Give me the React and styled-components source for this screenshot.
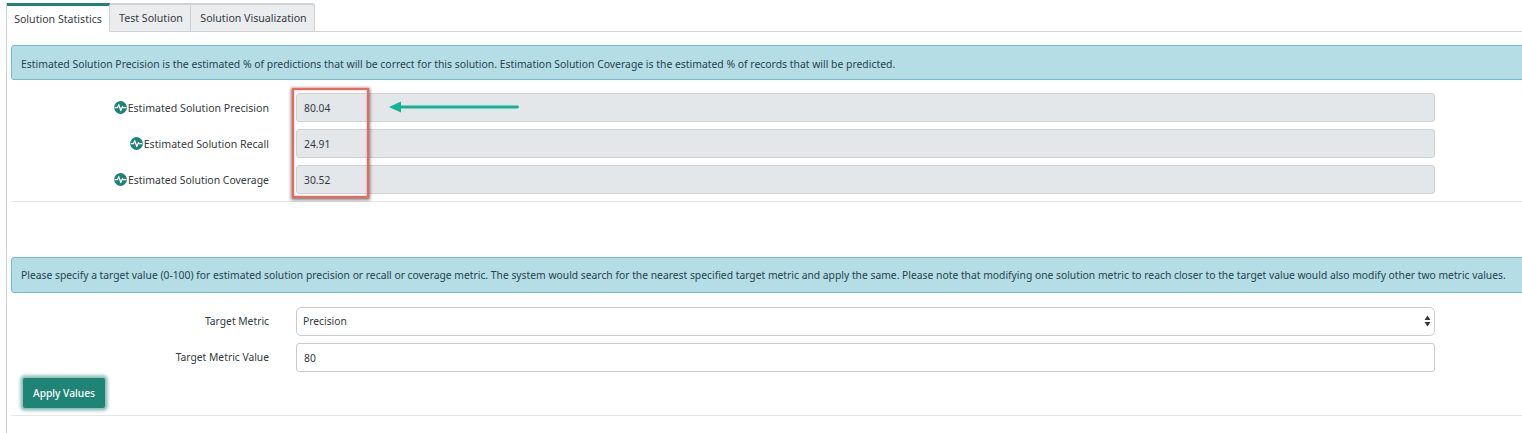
import React from "react";
import styled, { createGlobalStyle } from "styled-components";

const Global = createGlobalStyle`
  html, body { margin: 0; padding: 0; background: #fff; }
  body { font-family: "Noto Sans", "Open Sans", "Liberation Sans", sans-serif; color: #343a40; overflow: hidden; }
`;
const Page = styled.div`
  width: 1522px; height: 433px; box-sizing: border-box; padding: 3px 0 0 6px; overflow: hidden;
`;
const Panel = styled.div`
  border-left: 1px solid #cfd2d4; height: 430px;
`;
const TabBar = styled.div`
  display: flex; height: 29px; box-sizing: border-box; border-bottom: 1px solid #cfd2d4;
`;
const Tab = styled.div`
  height: 29px; box-sizing: border-box; display: flex; align-items: center; justify-content: center;
  width: ${p => p.$w}px; font-size: 10.6px; color: #343a40;
  background: ${p => (p.$active ? "#fff" : "#eaecee")};
  border-top: ${p => (p.$active ? "3px solid #1f8476" : "2px solid #cfd2d4")};
  border-right: 1px solid #cfd2d4;
  padding: ${p => (p.$active ? "0 0 0 0" : "0 0 0 2px")};
  border-bottom: ${p => (p.$active ? "1px solid #fff" : "1px solid #cfd2d4")};
  &:last-child { border-top-right-radius: 3px; }
`;
const Body = styled.div`
  padding: 13px 0 0 4px;
`;
const Alert = styled.div`
  height: ${p => p.$h}px; box-sizing: border-box; width: 1520px; display: flex; align-items: center; padding: ${p => p.$pt}px 0 0 9px;
  background: #b5dde5; border: 1px solid #6fbfcb; border-radius: 3px 0 0 3px;
  font-size: ${p => p.$size}px; color: #23444c; white-space: nowrap;
`;
const Section = styled.div`
  position: relative; padding-top: ${p => p.$top}px; display: flex; flex-direction: column; gap: 7px;
`;
const Row = styled.div`
  display: grid; grid-template-columns: 258px 1139px; column-gap: 27px; align-items: center; height: 29px;
`;
const Label = styled.div`
  display: flex; justify-content: flex-end; align-items: center; gap: 1px; font-size: ${p => p.$size}px; color: #343a40;
  padding-bottom: ${p => p.$pb}px;
`;
const Readonly = styled.div`
  height: 29px; box-sizing: border-box; display: flex; align-items: center; padding: 1px 0 0 7px;
  background: #e4e7ea; border: 1px solid #cfd2d4; border-radius: 3px; font-size: 10.3px; color: #343a40;
`;
const TextInput = styled(Readonly)`
  background: #fff; border-color: #c9cccf;
`;
const SelectWrap = styled.div`
  position: relative; height: 29px;
`;
const Select = styled.select`
  appearance: none; width: 100%; height: 29px; box-sizing: border-box; padding: 0 0 2px 6px;
  background: #fff; border: 1px solid #c9cccf; border-radius: 5px; font: inherit; font-size: 10.3px; color: #343a40;
`;
const Caret = styled.svg`
  position: absolute; right: 4px; top: 8px; width: 7px; height: 12px;
`;
const Divider = styled.div`
  height: 1px; background: #e4e6e8; width: 1520px; margin-top: ${p => p.$top}px;
`;
const RedBox = styled.div`
  position: absolute; left: 281px; top: 8px; width: 77px; height: 110px; box-sizing: border-box;
  border: 2px solid #f2665a; box-shadow: 0 1px 3px 1px rgba(0,0,0,.5), inset 0 0 2px rgba(0,0,0,.35);
`;
const Arrow = styled.svg`
  position: absolute; left: 377px; top: 20px; width: 131px; height: 14px;
`;
const Button = styled.button`
  display: block; margin: 5px 0 0 11px; width: 84px; height: 32px; box-sizing: border-box; border: 1px solid #8fc4bb; border-radius: 3px;
  background: #1f8476; color: #fff; font: inherit; font-size: 10.2px; font-weight: 500; padding: 0;
  box-shadow: 0 0 3px 2px rgba(31,132,118,.45);
`;
const Spacer = styled.div`
  height: 55px;
`;

const Pulse = () => (
  <svg width="13" height="13" viewBox="0 0 12 12" aria-hidden="true">
    <circle cx="6" cy="6" r="5.9" fill="#1f8476" />
    <path d="M0.6 6.2H3.1L4.4 3.4L6.3 8.8L7.7 5.2L8.5 6.2H11.4" fill="none" stroke="#fff" strokeWidth="1.15" strokeLinejoin="round" />
  </svg>
);

const metrics = [
  ["Estimated Solution Precision", "80.04", 10.6],
  ["Estimated Solution Recall", "24.91", 10.6],
  ["Estimated Solution Coverage", "30.52", 10.45],
];

export default function App() {
  return (
    <Page>
      <Global />
      <Panel>
        <TabBar>
          <Tab $active $w={103}>Solution Statistics</Tab>
          <Tab $w={81}>Test Solution</Tab>
          <Tab $w={124}>Solution Visualization</Tab>
        </TabBar>
        <Body>
          <Alert $h={35} $size={10.4} $pt={2}>Estimated Solution Precision is the estimated % of predictions that will be correct for this solution. Estimation Solution Coverage is the estimated % of records that will be predicted.</Alert>
          <Section $top={13}>
            {metrics.map(([l, v, s]) => (
              <Row key={l}>
                <Label $size={s} $pb={0}><Pulse />{l}</Label>
                <Readonly>{v}</Readonly>
              </Row>
            ))}
            <RedBox />
            <Arrow viewBox="0 0 131 14">
              <path d="M1 7L13 1.5V5.6H129.5a1.4 1.4 0 0 1 0 2.8H13V12.5Z" fill="#12b294" />
            </Arrow>
          </Section>
          <Divider $top={7} />
          <Spacer />
          <Alert $h={36} $size={10.32} $pt={0}>Please specify a target value (0-100) for estimated solution precision or recall or coverage metric. The system would search for the nearest specified target metric and apply the same. Please note that modifying one solution metric to reach closer to the target value would also modify other two metric values.</Alert>
          <Section $top={14}>
            <Row>
              <Label $size={10.3} $pb={2}>Target Metric</Label>
              <SelectWrap>
                <Select defaultValue="Precision"><option>Precision</option></Select>
                <Caret viewBox="0 0 7 12"><path d="M3.5 0.5L6.5 5H0.5ZM3.5 11.5L0.5 7H6.5Z" fill="#343a40" /></Caret>
              </SelectWrap>
            </Row>
            <Row>
              <Label $size={10.3} $pb={2}>Target Metric Value</Label>
              <TextInput>80</TextInput>
            </Row>
          </Section>
          <Button>Apply Values</Button>
          <Divider $top={6} />
        </Body>
      </Panel>
    </Page>
  );
}
